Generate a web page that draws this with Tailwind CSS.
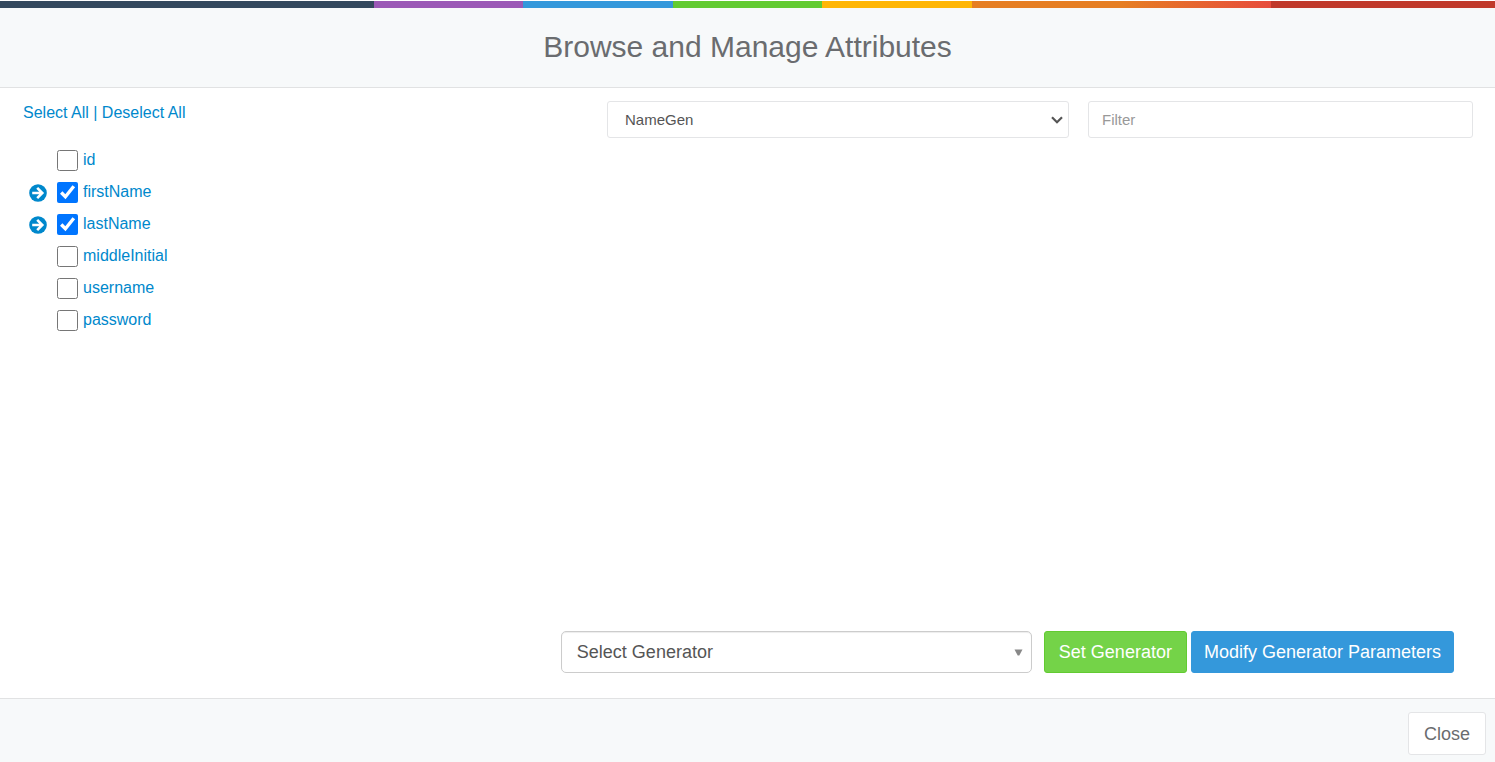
<!DOCTYPE html>
<html lang="en">
<head>
<meta charset="utf-8">
<meta name="viewport" content="width=device-width, initial-scale=1">
<title>Browse and Manage Attributes</title>
<script src="https://cdn.jsdelivr.net/npm/@tailwindcss/browser@4"></script>
</head>
<body class="flex min-h-screen flex-col bg-white pt-px font-['Liberation_Sans',Arial,sans-serif] text-base text-[#6a6c6f]">
<div class="h-[7px] shrink-0 bg-[linear-gradient(to_right,#34495e_25%,#9b59b6_25%,#9b59b6_35%,#3498db_35%,#3498db_45%,#62cb31_45%,#62cb31_55%,#ffb606_55%,#ffb606_65%,#e67e22_65%,#e67e22_75%,#e74c3c_85%,#c0392b_85%,#c0392b_100%)]"></div>
<header class="border-b border-[#e1e2e3] bg-[#f7f9fa] pt-[21px] pb-[23px] text-center">
  <h1 class="text-[30px] leading-[35px]">Browse and Manage Attributes</h1>
</header>
<main class="flex grow flex-col">
  <div class="flex grow items-start pr-[22px] pl-[23px]">
    <section class="w-[584px] shrink-0 pt-[13px] text-[#0088cc]">
      <p class="leading-6"><a href="#" id="all">Select All</a> | <a href="#" id="none">Deselect All</a></p>
      <ul class="pt-[19px]">
        <li class="flex h-8 items-center"><span class="w-[34px]"></span><input type="checkbox" id="a1" class="size-[21px] accent-[#0075ff]"><label for="a1" class="pl-[5px]">id</label></li>
        <li class="flex h-8 items-center"><span class="w-[34px] pt-px pl-[6px]"><svg class="size-[18px]" viewBox="0 0 18 18" aria-hidden="true"><circle cx="9" cy="9" r="8.8" fill="#0088cc"/><path d="M3.2 9h10M8.2 3.9 13.3 9l-5.1 5.1" fill="none" stroke="#fff" stroke-width="2.6"/></svg></span><input type="checkbox" id="a2" checked class="size-[21px] accent-[#0075ff]"><label for="a2" class="pl-[5px]">firstName</label></li>
        <li class="flex h-8 items-center"><span class="w-[34px] pt-px pl-[6px]"><svg class="size-[18px]" viewBox="0 0 18 18" aria-hidden="true"><circle cx="9" cy="9" r="8.8" fill="#0088cc"/><path d="M3.2 9h10M8.2 3.9 13.3 9l-5.1 5.1" fill="none" stroke="#fff" stroke-width="2.6"/></svg></span><input type="checkbox" id="a3" checked class="size-[21px] accent-[#0075ff]"><label for="a3" class="pl-[5px]">lastName</label></li>
        <li class="flex h-8 items-center"><span class="w-[34px]"></span><input type="checkbox" id="a4" class="size-[21px] accent-[#0075ff]"><label for="a4" class="pl-[5px]">middleInitial</label></li>
        <li class="flex h-8 items-center"><span class="w-[34px]"></span><input type="checkbox" id="a5" class="size-[21px] accent-[#0075ff]"><label for="a5" class="pl-[5px]">username</label></li>
        <li class="flex h-8 items-center"><span class="w-[34px]"></span><input type="checkbox" id="a6" class="size-[21px] accent-[#0075ff]"><label for="a6" class="pl-[5px]">password</label></li>
      </ul>
    </section>
    <div class="grid grow grid-cols-[6fr_5fr] gap-[19px] pt-[13px] text-[15px] text-[#555]">
      <div class="grid">
        <select aria-label="Generator filter" class="col-start-1 row-start-1 h-[37px] w-full appearance-none rounded-[3px] border border-[#e4e5e7] bg-white px-[17px] pt-px"><option>NameGen</option></select>
        <svg class="pointer-events-none col-start-1 row-start-1 mr-[6px] h-2 w-3 self-center justify-self-end" viewBox="0 0 12 8" aria-hidden="true"><path d="m1 1.2 5 5 5-5" fill="none" stroke="#555" stroke-width="2.2"/></svg>
      </div>
      <input type="text" aria-label="Filter" placeholder="Filter" class="h-[37px] w-full rounded-[3px] border border-[#e4e5e7] bg-white px-[13px] placeholder:text-[#999]">
    </div>
  </div>
  <div class="flex justify-end pr-[41px] pb-[25px] text-lg">
    <div class="mr-3 grid w-[471px]">
      <select aria-label="Select Generator" class="col-start-1 row-start-1 h-[42px] w-full appearance-none rounded-[5px] border border-[#ccc] bg-white px-[15px] text-[#555] shadow-[inset_0_1px_1px_rgba(0,0,0,0.075)]"><option>Select Generator</option></select>
      <svg class="pointer-events-none col-start-1 row-start-1 mr-[9px] h-[7px] w-[9px] self-center justify-self-end" viewBox="0 0 9 7" aria-hidden="true"><path d="M.5.5h8l-3.2 6H3.7z" fill="#888"/></svg>
    </div>
    <button type="button" class="mr-1 h-[42px] rounded-[3px] border border-[#62cb31] bg-[#74d348] px-3.5 text-white">Set Generator</button>
    <button type="button" class="h-[42px] rounded-[3px] border border-[#3498db] bg-[#3498db] px-3 text-white">Modify Generator Parameters</button>
  </div>
</main>
<footer class="flex justify-end border-t border-[#e1e2e3] bg-[#f7f9fa] pt-[13px] pr-[9px] pb-[7px] text-lg">
  <button type="button" class="h-[43px] rounded-[3px] border border-[#e4e5e7] bg-white px-[15px]">Close</button>
</footer>
<script>
for (const [id, on] of [["all", true], ["none", false]]) {
  document.getElementById(id).addEventListener("click", e => {
    e.preventDefault();
    document.querySelectorAll("input[type=checkbox]").forEach(c => { c.checked = on; });
  });
}
</script>
</body>
</html>
